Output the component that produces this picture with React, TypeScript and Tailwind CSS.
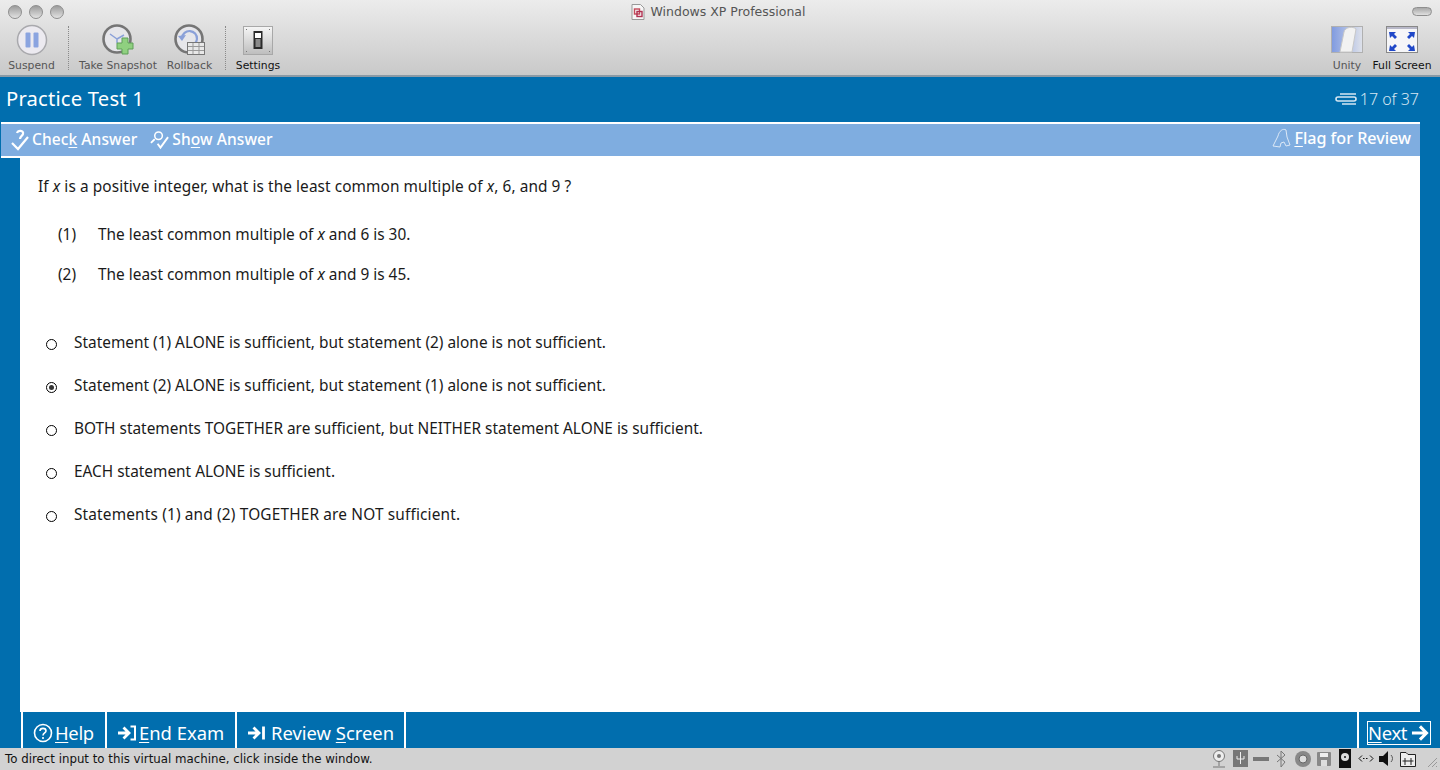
import React from "react";

function Tool({ label, dark, children, w }: { label: string; dark?: boolean; children: React.ReactNode; w: string }) {
  return (
    <div className={`flex flex-col items-center ${w}`}>
      <div className="flex h-[32px] w-[34px] items-center justify-center">{children}</div>
      <div className={`mt-[3px] whitespace-nowrap text-[10.8px] leading-[14px] font-['DejaVu_Sans',sans-serif] ${dark ? "text-[#111]" : "text-[#555]"}`}>{label}</div>
    </div>
  );
}

const Sep = ({ className }: { className: string }) => <div className={`mt-[2px] h-[44px] w-0 border-l border-dotted border-[#8a8a8a] ${className}`} />;

function Clock({ children }: { children?: React.ReactNode }) {
  return (
    <svg width="34" height="34" viewBox="0 0 34 34">
      <circle cx="16" cy="16" r="13.500" fill="#e6e6ea" stroke="#757575" strokeWidth="2.600" />
      {children}
    </svg>
  );
}

function Radio({ checked }: { checked?: boolean }) {
  return (
    <span className="flex h-[11px] w-[11px] shrink-0 items-center justify-center rounded-full border-[1.5px] border-black bg-white">
      {checked && <span className="h-[5px] w-[5px] rounded-full bg-[#333]" />}
    </span>
  );
}

function Option({ text, checked, className }: { text: string; checked?: boolean; className?: string }) {
  return (
    <div className="flex h-[43px] items-center">
      <div className="ml-[26px] mt-[3px] w-[28px]"><Radio checked={checked} /></div>
      <div className={`whitespace-nowrap ${className ?? ""}`}>{text}</div>
    </div>
  );
}

function U({ children }: { children: React.ReactNode }) {
  return <span className="underline underline-offset-2 decoration-1">{children}</span>;
}

const Arrow = ({ bar, box, big }: { bar?: boolean; box?: boolean; big?: boolean }) => (
  <svg width="20" height="18" viewBox="0 0 20 18" fill="none" stroke="#fff" strokeWidth={big ? 3.2 : 2.8}>
    {big ? <path d="M1 9H16M9.500 2L16.500 9L9.500 16" /> : <path d="M1 9H11M6.500 3.500L12 9L6.500 14.500" />}
    {bar && <path d="M16.500 2.500V15.500" />}
    {box && <path d="M13.500 2.500H18V15.500H13.500" strokeWidth="2" />}
  </svg>
);

export default function App() {
  return (
    <div className="flex h-[770px] w-[1440px] flex-col overflow-hidden bg-[#016eae] font-['Noto_Sans',sans-serif]">
      {/* window chrome */}
      <div className="h-[77px] shrink-0 border-b-2 border-[#8b9aa5] bg-gradient-to-b from-[#ececec] to-[#c9c9c9]">
        <div className="flex h-[23px] items-center px-[8px]">
          <div className="flex gap-[7px]">
            {[0, 1, 2].map((i) => (
              <span key={i} className="h-[14px] w-[14px] rounded-full border border-[#8e8e8e] bg-gradient-to-b from-[#9c9c9c] to-[#e2e2e2]" />
            ))}
          </div>
          <div className="flex flex-1 items-center justify-center pr-[40px]">
            <svg width="14" height="16" viewBox="0 0 14 16" className="mr-[6px]">
              <path d="M1 .5H9.500L13 4V15.500H1Z" fill="#f6f6f6" stroke="#999" />
              <rect x="3.500" y="5" width="5" height="5" fill="none" stroke="#c44a5a" strokeWidth="1.400" />
              <rect x="6" y="7.500" width="5" height="5" fill="none" stroke="#b03050" strokeWidth="1.400" />
            </svg>
            <span className="mt-[2px] font-['DejaVu_Sans',sans-serif] text-[12.5px] text-[#555]">Windows XP Professional</span>
          </div>
          <span className="h-[9px] w-[20px] rounded-full border border-[#8e8e8e] bg-gradient-to-b from-[#a8a8a8] to-[#e0e0e0]" />
        </div>
        <div className="flex items-start pl-[4px] pr-[3px] pt-[1px]">
          <Tool label="Suspend" w="w-[55px]">
            <svg width="32" height="32" viewBox="0 0 32 32">
              <circle cx="16" cy="16" r="14.500" fill="#eceaf0" stroke="#a9a9ad" strokeWidth="1.500" />
              <rect x="9.500" y="8.500" width="5" height="15" rx="1" fill="#8ba4e0" />
              <rect x="17.500" y="8.500" width="5" height="15" rx="1" fill="#8ba4e0" />
            </svg>
          </Tool>
          <Sep className="ml-[9px] mr-[10px]" />
          <Tool label="Take Snapshot" w="w-[78px]">
            <Clock>
              <path d="M16 16L9 11M16 16L23 12M16 16V20" stroke="#8aa0d8" strokeWidth="1.500" fill="none" />
              <path d="M21 15h6v5h5v6h-5v5h-6v-5h-5v-6h5z" fill="#8fd080" stroke="#5f9f58" />
            </Clock>
          </Tool>
          <div className="w-[6px]" />
          <Tool label="Rollback" w="w-[53px]">
            <Clock>
              <path d="M9 15A7.500 7.500 0 1 1 16 23" fill="none" stroke="#8aa0d8" strokeWidth="2.200" />
              <path d="M5 13L13 12L9 18Z" fill="#8aa0d8" />
              <rect x="14.500" y="19.500" width="17" height="12" fill="#e8e8e8" stroke="#777" />
              <path d="M15 23.500H31M15 27.500H31M20 20V31M26 20V31" stroke="#999" />
            </Clock>
          </Tool>
          <Sep className="ml-[9px] mr-[9px]" />
          <Tool label="Settings" dark w="w-[46px]">
            <svg width="30" height="29" viewBox="0 0 30 29">
              <defs>
                <linearGradient id="sw" x1="0" y1="0" x2="0" y2="1">
                  <stop offset="0" stopColor="#f6f6f6" />
                  <stop offset="1" stopColor="#bdbdbd" />
                </linearGradient>
              </defs>
              <rect x=".5" y=".5" width="29" height="28" fill="url(#sw)" stroke="#a8a8a8" />
              <rect x="10.500" y="5" width="9" height="18" fill="#2a2a2a" />
              <rect x="12" y="7" width="6" height="5" fill="#fff" />
              <rect x="12.500" y="13" width="5" height="8" fill="#8a8a8a" />
              <path d="M3 3h1v1H3zM26 3h1v1h-1zM3 25h1v1H3zM26 25h1v1h-1z" fill="#777" />
            </svg>
          </Tool>
          <div className="flex-1" />
          <Tool label="Unity" w="w-[40px]">
            <svg width="32" height="28" viewBox="0 0 32 28">
              <defs>
                <linearGradient id="un" x1="0" y1="0" x2="1" y2="0">
                  <stop offset="0" stopColor="#7f9ae0" />
                  <stop offset="1" stopColor="#dfe2ea" />
                </linearGradient>
              </defs>
              <rect x=".5" y=".5" width="31" height="26" fill="url(#un)" stroke="#b0b0b0" />
              <path d="M13 6C14 1 22 0 25 3L21 26H9Z" fill="#f2f2f2" stroke="#c8c8c8" />
            </svg>
          </Tool>
          <Tool label="Full Screen" dark w="w-[70px]">
            <svg width="32" height="28" viewBox="0 0 32 28">
              <rect x=".5" y=".5" width="31" height="26" fill="#f6f6f8" stroke="#888" />
              <rect x="1" y="1" width="30" height="2" fill="#b8b8c8" />
              <path d="M3 6h7l-2 2 3 3-2 2-3-3-2 2zM29 6h-7l2 2-3 3 2 2 3-3 2 2zM3 25h7l-2-2 3-3-2-2-3 3-2-2zM29 25h-7l2-2-3-3 2-2 3 3 2-2z" fill="#2048c8" />
            </svg>
          </Tool>
        </div>
      </div>

      {/* title row */}
      <div className="flex h-[45px] shrink-0 items-center justify-between pb-[2px] pl-[6px] pr-[21px] text-white">
        <span className="text-[20.2px] tracking-[0.2px]">Practice Test 1</span>
        <span className="flex items-center gap-[3px] text-[16px] font-light text-[#d5e6f2]">
          <svg width="22" height="14" viewBox="0 0 22 14" fill="none" stroke="#d5e6f2" strokeWidth="1.600">
            <path d="M5 2H21M3 5H19a2 2 0 010 4H3a2 2 0 010-4ZM7 12H21" />
          </svg>
          17 of 37
        </span>
      </div>

      {/* action bar */}
      <div className="ml-[1px] flex h-[36px] w-[1419px] shrink-0 items-center justify-between border-y-2 border-white bg-[#7fade0] pb-[1px] pl-[10px] pr-[9px] text-[15.5px] font-medium tracking-[0.1px] text-white">
        <div className="flex items-center">
          <span className="flex items-center gap-[3px]">
            <svg width="18" height="22" viewBox="0 0 18 22" fill="none" stroke="#fff" strokeWidth="2.200">
              <path d="M6 4C7 1 13 1 12 5C11.500 7 9 7 9 10" /><path d="M1 14L7 20L17 8" />
            </svg>
            <span>Chec<U>k</U> Answer</span>
          </span>
          <span className="ml-[13px] flex items-center gap-[3px]">
            <svg width="19" height="20" viewBox="0 0 20 20" fill="none" stroke="#fff" strokeWidth="1.600">
              <circle cx="9" cy="5.500" r="4" /><path d="M5 9L1 13M8 14L11 18L19 7" strokeWidth="2" />
            </svg>
            <span>Sh<U>o</U>w Answer</span>
          </span>
        </div>
        <span className="mb-[2px] flex items-center gap-[3px] text-[16.1px] tracking-normal">
          <svg width="19" height="20" viewBox="0 0 19 20" fill="none" stroke="#dce8f6" strokeWidth="1">
            <path d="M1 18L6 8C7 3 11 0 14 2L15 9L18 17L14 18L12 14L9 15L8 19Z" />
          </svg>
          <span><U>F</U>lag for Review</span>
        </span>
      </div>

      {/* main */}
      <div className="ml-[20px] mr-[20px] h-[554px] shrink-0 bg-white text-[15.4px] leading-[22px] text-[#1a1a1a]">
        <div className="pl-[18px] pt-[18px] tracking-[0.08px]">If <i>x</i> is a positive integer, what is the least common multiple of <i>x</i>, 6, and 9 ?</div>
        <div className="mt-[26px] flex pl-[38px]"><span className="w-[40px]">(1)</span><span>The least common multiple of <i>x</i> and 6 is 30.</span></div>
        <div className="mt-[18px] flex pl-[38px]"><span className="w-[40px]">(2)</span><span>The least common multiple of <i>x</i> and 9 is 45.</span></div>
        <div className="mt-[35px]">
          <Option text="Statement (1) ALONE is sufficient, but statement (2) alone is not sufficient." />
          <Option checked text="Statement (2) ALONE is sufficient, but statement (1) alone is not sufficient." />
          <Option text="BOTH statements TOGETHER are sufficient, but NEITHER statement ALONE is sufficient." />
          <Option text="EACH statement ALONE is sufficient." />
          <Option className="tracking-[0.16px]" text="Statements (1) and (2) TOGETHER are NOT sufficient." />
        </div>
      </div>

      {/* footer */}
      <div className="flex h-[36px] shrink-0 pl-[21px] text-[18.4px] text-white">
        <div className="flex w-[84px] items-center gap-[2px] border-l-2 border-white pl-[10px] pt-[6px]">
          <svg width="20" height="20" viewBox="0 0 20 20" fill="none" stroke="#fff" strokeWidth="1.600">
            <circle cx="10" cy="10" r="8.500" /><path d="M7 8C7 4.500 13 4.500 13 8C13 10 10 10 10 12.500" /><path d="M10 14V16" />
          </svg>
          <span className="tracking-[-0.3px]"><U>H</U>elp</span>
        </div>
        <div className="flex w-[130px] items-center gap-[2px] border-l-2 border-white pl-[10px] pt-[6px]">
          <Arrow box />
          <span><U>E</U>nd Exam</span>
        </div>
        <div className="flex w-[171px] items-center gap-[4px] border-x-2 border-white pl-[10px] pt-[6px]">
          <Arrow bar />
          <span>Review <U>S</U>creen</span>
        </div>
        <div className="flex-1" />
        <div className="flex w-[83px] items-center border-l-2 border-white pl-[8px] pt-[6px]">
          <div className="flex h-[24px] w-[64px] items-center gap-[4px] border border-white">
            <span className="tracking-[-0.3px]"><U>N</U>ext</span>
            <Arrow big />
          </div>
        </div>
      </div>

      {/* status */}
      <div className="flex h-[22px] shrink-0 items-center justify-between bg-[#d2d2d2] pl-[5px] pr-[1px] font-['DejaVu_Sans',sans-serif] text-[11.8px] text-[#111]">
        <span className="mt-[2px]">To direct input to this virtual machine, click inside the window.</span>
        <svg width="230" height="20" viewBox="0 0 230 20" fill="none">
          <circle cx="10" cy="7" r="5.500" fill="#eee" stroke="#777" /><circle cx="10" cy="7" r="2" fill="#777" /><path d="M10 12V17M4 18H16" stroke="#777" />
          <rect x="24" y="1" width="15" height="17" fill="#777" /><path d="M31.500 3V15M28 7V10H35V7" stroke="#eee" />
          <rect x="44" y="8" width="16" height="4" fill="#777" />
          <path d="M68 6L76 13L72 18V2L76 6L68 13" stroke="#777" />
          <circle cx="94" cy="10" r="8" fill="#888" /><circle cx="94" cy="10" r="4" fill="#ddd" stroke="#666" />
          <rect x="108" y="3" width="14" height="14" rx="1" fill="#888" /><rect x="111" y="4" width="8" height="4" fill="#eee" /><rect x="112" y="11" width="6" height="6" fill="#ddd" />
          <rect x="130" y="0" width="12" height="19" fill="#111" /><circle cx="136" cy="8" r="4" fill="#ddd" /><circle cx="136" cy="8" r="1" fill="#111" />
          <path d="M153 6.500L150 9.500L153 12.500M161 6.500L164 9.500L161 12.500" stroke="#111" />
          <path d="M154 9.500H160" stroke="#111" strokeDasharray="1.500 1.500" />
          <path d="M170 7H174L179 2V17L174 13H170Z" fill="#111" /><path d="M182 6C184 8 184 11 182 13" stroke="#555" />
          <path d="M191.500 3.500H197L199 5.500H206.500V17.500H191.500Z" fill="#eee" stroke="#222" /><path d="M196 9V16M202 9V16M193.500 12H204.500" stroke="#222" />
          <path d="M219 18L228 9M223 18L228 13M227 18L228 17" stroke="#999" />
        </svg>
      </div>
    </div>
  );
}
